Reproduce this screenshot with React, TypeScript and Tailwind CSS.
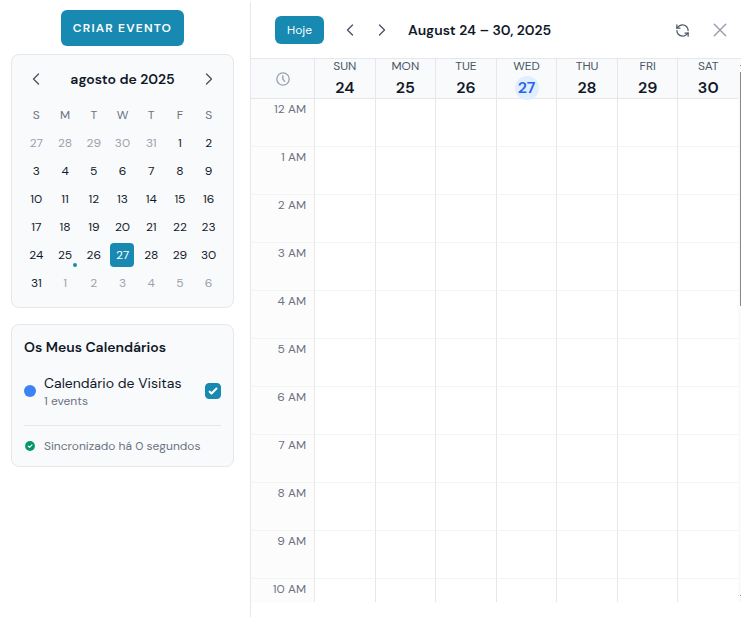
import { useState } from "react";
import { RefreshCcw } from "lucide-react";

const weekdays = ["S", "M", "T", "W", "T", "F", "S"];

type Day = { day: number; outside: boolean };

const monthDays: Day[] = Array.from({ length: 42 }, (_, i) => {
  const date = new Date(2025, 6, 27 + i);
  return { day: date.getDate(), outside: date.getMonth() !== 7 };
});

const week = [
  { name: "SUN", day: 24 },
  { name: "MON", day: 25 },
  { name: "TUE", day: 26 },
  { name: "WED", day: 27, today: true },
  { name: "THU", day: 28 },
  { name: "FRI", day: 29 },
  { name: "SAT", day: 30 },
];

const hours = ["12 AM", "1 AM", "2 AM", "3 AM", "4 AM", "5 AM", "6 AM", "7 AM", "8 AM", "9 AM", "10 AM"];

function Chevron({ flip = false }: { flip?: boolean }) {
  return (
    <svg viewBox="0 0 16 16" className="size-4" fill="none" stroke="currentColor" strokeWidth="1.4" strokeLinecap="round" strokeLinejoin="round" aria-hidden="true">
      <path d={flip ? "M5.5 3 10.5 8 5.5 13" : "M10.5 3 5.5 8 10.5 13"} />
    </svg>
  );
}

function MiniCalendar() {
  return (
    <section className="rounded-lg border border-gray-200 bg-gray-50 p-[10px]">
      <div className="mb-2 flex items-center justify-between">
        <button aria-label="Mês anterior" className="flex size-7 items-center justify-center text-gray-600">
          <Chevron />
        </button>
        <h2 className="text-sm font-semibold text-gray-900">agosto de 2025</h2>
        <button aria-label="Mês seguinte" className="flex size-7 items-center justify-center text-gray-600">
          <Chevron flip />
        </button>
      </div>
      <div className="grid grid-cols-7">
        {weekdays.map((d, i) => (
          <div key={i} className="flex h-7 items-center justify-center text-xs text-gray-500">
            {d}
          </div>
        ))}
        {monthDays.map(({ day, outside }, i) => {
          const selected = day === 27 && !outside;
          const color = selected ? "bg-[#188ab2] text-white" : outside ? "text-gray-400" : "text-gray-900";
          return (
            <div key={i} className="relative flex h-7 items-center justify-center">
              <button className={`size-6 rounded text-xs ${color}`}>{day}</button>
              {day === 25 && !outside && (
                <span className="absolute right-0.5 bottom-0.5 size-1 rounded-full bg-[#188ab2]" />
              )}
            </div>
          );
        })}
      </div>
    </section>
  );
}

function CalendarList() {
  const [visible, setVisible] = useState(true);
  return (
    <section className="rounded-lg border border-gray-200 bg-gray-50 p-3">
      <h2 className="mb-4 text-sm font-semibold text-gray-900">Os Meus Calendários</h2>
      <div className="flex items-center gap-2">
        <span className="size-3 rounded-full bg-[#3b82f6]" />
        <label htmlFor="visitas" className="flex-1">
          <span className="block text-sm text-gray-900">Calendário de Visitas</span>
          <span className="block text-xs text-gray-500">1 events</span>
        </label>
        <span className="relative flex size-4">
          <input
            id="visitas"
            type="checkbox"
            checked={visible}
            onChange={(e) => setVisible(e.target.checked)}
            className="peer size-4 appearance-none rounded border border-[#188ab2] bg-white checked:bg-[#188ab2]"
          />
          <svg viewBox="0 0 16 16" className="pointer-events-none absolute inset-0 hidden size-4 peer-checked:block" fill="#fff" aria-hidden="true">
            <path d="M12.2 4.8a1 1 0 0 1 0 1.4l-5 5a1 1 0 0 1-1.4 0l-2-2a1 1 0 0 1 1.4-1.4l1.3 1.3 4.3-4.3a1 1 0 0 1 1.4 0z" />
          </svg>
        </span>
      </div>
      <div className="mt-4 flex items-center gap-2 border-t border-gray-200 pt-3 text-xs text-gray-500">
        <svg viewBox="0 0 12 12" className="size-3" aria-hidden="true">
          <circle cx="6" cy="6" r="4.9" fill="#059669" />
          <path d="m4.2 6.1 1.3 1.3 2.5-2.6" fill="none" stroke="#fff" strokeWidth="1.1" strokeLinecap="round" strokeLinejoin="round" />
        </svg>
        <span>Sincronizado há 0 segundos</span>
      </div>
    </section>
  );
}

function Toolbar() {
  return (
    <header className="flex h-14 items-center pr-[7px] pl-6 text-gray-600">
      <button className="h-7 rounded-md bg-[#188ab2] px-3 text-xs text-white">Hoje</button>
      <div className="ml-3 flex gap-1">
        <button aria-label="Semana anterior" className="flex size-7 items-center justify-center">
          <Chevron />
        </button>
        <button aria-label="Semana seguinte" className="flex size-7 items-center justify-center">
          <Chevron flip />
        </button>
      </div>
      <h1 className="ml-3 flex-1 text-sm font-semibold text-gray-900">August 24 – 30, 2025</h1>
      <button aria-label="Atualizar" className="flex size-7 items-center justify-center">
        <RefreshCcw size={15} strokeWidth={2} aria-hidden="true" />
      </button>
      <button aria-label="Fechar" className="ml-2.5 flex size-7 items-center justify-center text-gray-400">
        <svg viewBox="0 0 16 16" className="size-4" fill="none" stroke="currentColor" strokeWidth="1.5" strokeLinecap="round" aria-hidden="true">
          <path d="m2.3 2.3 11.4 11.4M13.7 2.3 2.3 13.7" />
        </svg>
      </button>
    </header>
  );
}

function WeekGrid() {
  return (
    <div className="flex border-t border-gray-200">
      <table className="block flex-1">
        <thead className="block">
          <tr className="flex h-10 border-b border-gray-200 bg-gray-50">
            <th aria-label="Hora" className="flex w-16 items-center justify-center border-r border-gray-200 text-gray-400">
              <svg viewBox="0 0 16 16" className="size-4" fill="none" stroke="currentColor" strokeWidth="1.3" strokeLinecap="round" aria-hidden="true">
                <circle cx="8" cy="8" r="6.2" />
                <path d="M7.8 4.6V8l1.8 2.4" />
              </svg>
            </th>
            {week.map(({ name, day, today }) => (
              <th key={name} className="flex flex-1 flex-col items-center gap-[3px] border-r border-gray-200 font-normal last:border-r-0">
                <span className="text-xs leading-[14px] text-gray-600">{name}</span>
                <span className={`flex size-6 shrink-0 items-center justify-center rounded-full text-base font-semibold ${today ? "bg-[#e0eefe] text-[#2563eb]" : "text-gray-900"}`}>
                  {day}
                </span>
              </th>
            ))}
          </tr>
        </thead>
        <tbody className="block h-[503px] overflow-hidden">
          {hours.map((hour) => (
            <tr key={hour} className="flex h-12">
              <th className="w-16 border-r border-b border-r-gray-200 border-b-gray-100 bg-[#fcfcfc] pt-0.5 pr-2 text-right text-xs font-normal text-gray-500">
                {hour}
              </th>
              {week.map(({ name }) => (
                <td key={name} className="flex-1 border-r border-b border-r-gray-200 border-b-gray-100 last:border-r-0" />
              ))}
            </tr>
          ))}
        </tbody>
      </table>
      <div className="flex w-[3px] flex-col items-end bg-[#fafafa] py-1.5">
        <div className="h-px w-px bg-[#888]" />
        <div className="mt-1.5 mb-auto h-[234px] w-px bg-[#888]" />
        <div className="h-px w-px bg-[#888]" />
      </div>
    </div>
  );
}

export default function App() {
  return (
    <div className="flex min-h-screen bg-white font-['DM_Sans','Inter',sans-serif] antialiased [font-optical-sizing:none]">
      <aside className="flex w-[250px] shrink-0 flex-col pt-2.5 pr-4 pl-[11px]">
        <button className="mb-2 h-9 self-center rounded-md bg-[#188ab2] px-3 text-xs font-semibold tracking-widest text-white">
          CRIAR EVENTO
        </button>
        <div className="flex flex-col gap-4">
          <MiniCalendar />
          <CalendarList />
        </div>
      </aside>
      <main className="mt-0.5 min-w-0 flex-1 border-l border-gray-200">
        <Toolbar />
        <WeekGrid />
      </main>
    </div>
  );
}
